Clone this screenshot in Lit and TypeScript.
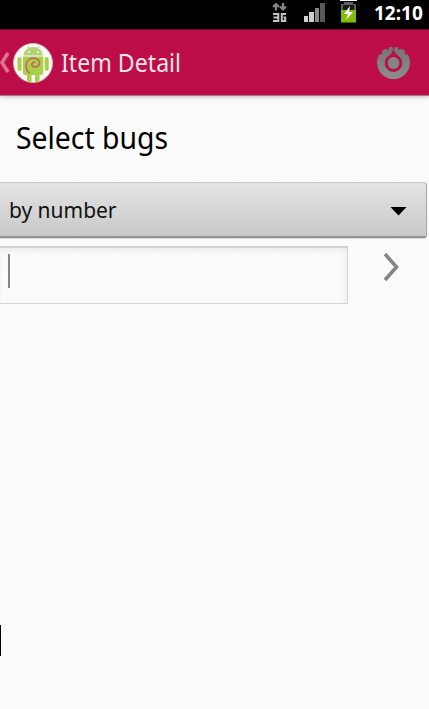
import { LitElement, html, css } from "lit";
import { customElement } from "lit/decorators.js";

@customElement("app-root")
export class AppRoot extends LitElement {
  static styles = css`
    :host {
      display: flex;
      flex-direction: column;
      position: relative;
      width: 429px;
      height: 709px;
      overflow: hidden;
      color: #000;
      background-color: #fbfbfb;
      background-image: linear-gradient(90deg, #f9f9f9 1px, transparent 1px),
        linear-gradient(#f9f9f9 1px, transparent 1px);
      background-size: 10px 10px;
      font-family: "Noto Sans", "Open Sans", sans-serif;
    }
    * { box-sizing: border-box; }
    svg { display: block; flex: none; }
    .text { display: block; white-space: nowrap; transform-origin: 0 50%; }
    .status {
      height: 29px;
      flex: none;
      display: flex;
      background: #000;
      color: #fff;
      padding-left: 260px;
    }
    .clock {
      font-size: 19px;
      font-weight: 700;
      line-height: 27px;
      width: 55px;
      margin-left: 4px;
    }
    .bar {
      height: 67px;
      flex: none;
      display: flex;
      align-items: center;
      background: #bd0d49;
      border-top: 1px solid #740329;
      border-bottom: 1px solid #a4798a;
      box-shadow: 0 1px 4px rgba(0, 0, 0, 0.25);
    }
    .title {
      flex: 1;
      width: 0;
      margin: 0 0 2px 8px;
      color: #f0e4e8;
      font-size: 25px;
      line-height: 34px;
      transform: scaleX(0.925);
    }
    .action { margin-right: 18px; }
    .heading {
      margin: 15px 0 0 16px;
      height: 54px;
      font-size: 30px;
      line-height: 54px;
      transform: scaleX(0.945);
    }
    .spinner {
      width: 427px;
      height: 56px;
      margin-top: 17px;
      display: flex;
      align-items: center;
      justify-content: space-between;
      padding: 0 19px 0 9px;
      background: linear-gradient(#e3e3e3, #c9c9c9);
      border-top: 1px solid #c8c8c8;
      border-right: 1px solid #a8a8a8;
      border-bottom: 2px solid #929292;
      border-radius: 0 3px 3px 0;
      box-shadow: 0 1px 1px rgba(0, 0, 0, 0.15);
    }
    .choice {
      margin-bottom: 2px;
      font-size: 22px;
      line-height: 32px;
      color: #111;
      transform: scaleX(0.953);
    }
    .arrow { margin-top: 3px; }
    .row { display: flex; margin-top: 8px; height: 58px; }
    .field {
      width: 348px;
      border: 1px solid #d4d4d4;
      border-left: 0;
      border-top: 2px solid #d2d2d2;
      padding: 6px 0 0 8px;
      box-shadow: inset -2px 3px 5px rgba(0, 0, 0, 0.06);
    }
    .caret { width: 2px; height: 34px; background: #858585; }
    .go { margin: 6px 0 0 34px; }
    .edge { width: 1px; height: 31px; margin-top: 321px; background: #000; }
  `;

  render() {
    return html`
      <div class="status">
        <svg width="110" height="29" viewBox="260 0 110 29">
          <g fill="none" stroke="#858585" stroke-width="2.2">
            <path d="M276 10.5V4M273 7 276 4 279 7M283 3V9M280 6.5 283 9.5 286 6.5" />
          </g>
          <g fill="none" stroke="#c4c4c4" stroke-width="2">
            <path d="M273 14H278.3V21H273M273.5 17.5H278M286 14H281.8V21H285.2V17.5H283.5" />
          </g>
          <path d="M304 16h4v6h-4zM309 12h5v10h-5z" fill="#cfcfcf" />
          <path d="M315 8h4v14h-4z" fill="#8a8a8a" />
          <path d="M320 3h5v19h-5z" fill="#585858" />
          <path d="M340 0h17v1h-17z" fill="#fff" />
          <path d="M344 2h9v2h3v18h-15V4h3z" fill="#606060" />
          <path d="M343 5h11v5h-11z" fill="#171d0c" />
          <path d="M341 10h15v12.5h-15z" fill="#84bd08" />
          <path d="M350 6 344 14h4l-2 6 7-8h-4z" fill="#fff" />
        </svg>
        <span class="text clock">12:10</span>
      </div>
      <div class="bar">
        <svg width="53" height="65" viewBox="0 30 53 65">
          <path d="M8 53 2 62.5 8 72" fill="none" stroke="#dc7394" stroke-width="3.6" />
          <circle cx="33" cy="63" r="19.5" fill="#f7f9f3" stroke="#d3b4bd" />
          <g fill="#aacf4a">
            <path d="M23.5 55.5a9.7 8.5 0 0 1 19.4 0z" fill="#b4d277" />
            <path d="M23 56.5H43.3V73a2 2 0 0 1-2 2H25a2 2 0 0 1-2-2z" />
            <rect x="17.5" y="57" width="4" height="14" rx="2" />
            <rect x="44.7" y="57" width="4" height="14" rx="2" />
            <path d="M27 74h4.500v8H29a2 2 0 0 1-2-2zM35 74h4.500v6a2 2 0 0 1-2 2H35z" />
          </g>
          <path d="M27.5 46 29 48.5M39 46 37.5 48.5" stroke="#b4d277" stroke-width="1" />
          <circle cx="29" cy="52" r=".9" fill="#fff" /><circle cx="38" cy="52" r=".9" fill="#fff" />
          <path d="M30 73.5C25 70 25 62.500 29 59.500 33.500 56.500 40 59 39.500 63.500 39 67.500 33.500 68 32 65.500 31.200 63 33.500 61.500 35.500 62.500" fill="none" stroke="#c95f60" stroke-width="1.5" />
        </svg>
        <span class="text title">Item Detail</span>
        <svg class="action" width="35" height="35" viewBox="0 0 35 35">
          <defs>
            <linearGradient id="metal" x1="0" y1="0" x2="0" y2="1">
              <stop offset="0" stop-color="#747474" /><stop offset="1" stop-color="#8d8d8d" />
            </linearGradient>
          </defs>
          <path d="M17.5 4.5 16 2H13V4.500H10.500L9.500 3.500 5.500 6 6.500 8.500 5.500 9.500H3L2 12A16.500 16.500 0 1 0 33 12L32 9.500H29.500L28.500 8.500 29.500 6 25.500 3.500 24.500 4.500H22V2H19z" fill="url(#metal)" />
          <path d="M17.5 3.500Q18.800 8.500 21.800 10.600A8.700 8.700 0 1 1 13.200 10.600Q16.200 8.500 17.500 3.500z" fill="#bd0d49" />
          <circle cx="17.5" cy="18" r="5.9" fill="#858585" />
        </svg>
      </div>
      <div class="text heading">Select bugs</div>
      <div class="spinner">
        <span class="text choice">by number</span>
        <svg class="arrow" width="17" height="9" viewBox="0 0 17 9"><path d="M0.5 0H16.5L8.5 8.5z" /></svg>
      </div>
      <div class="row">
        <div class="field"><div class="caret"></div></div>
        <svg class="go" width="20" height="32" viewBox="0 0 20 32">
          <path d="M3 2 14.5 15 3 28" fill="none" stroke="#858585" stroke-width="3.6" />
        </svg>
      </div>
      <div class="edge"></div>
    `;
  }
}
